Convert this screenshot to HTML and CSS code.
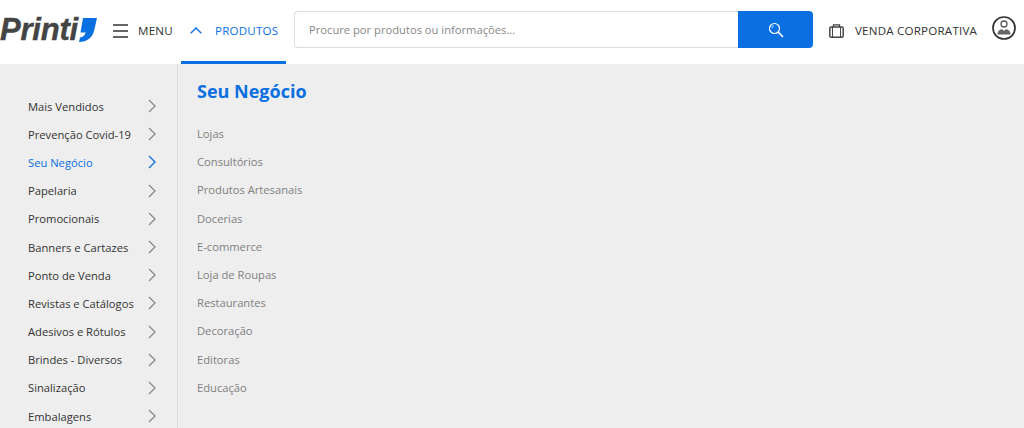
FILE: index.html
```html
<!DOCTYPE html>
<html lang="pt-br">
<head>
    <meta charset="UTF-8">
    <meta name="viewport" content="width=device-width, initial-scale=1.0">
    <title>Printi</title>
    <link rel="stylesheet" href="styles.css">
</head>
<body>
    <header class="topbar">
        <a class="logo" href="#">
            <span class="logo-text">Printi</span>
            <svg class="logo-mark" width="18" height="24" viewBox="0 0 18 24"><path d="M4 0H18L15.500 11C14 19 9.500 23.500 0 24L1 19.500C4 19 5.800 17.500 6.800 14.500H1.500Z" fill="#0a6fe0"/></svg>
        </a>
        <a class="nav-item menu" href="#">
            <svg width="16" height="14" viewBox="0 0 16 14"><path d="M1 1H16M1 7H16M1 13H16" stroke="#333" stroke-width="1.600" fill="none"/></svg>
            <span>MENU</span>
        </a>
        <a class="nav-item produtos" href="#">
            <svg width="12" height="7" viewBox="0 0 12 7"><path d="M.7 6.300 6 1l5.300 5.300" stroke="#0a6fe0" stroke-width="1.400" fill="none"/></svg>
            <span>PRODUTOS</span>
        </a>
        <form class="search">
            <input type="text" placeholder="Procure por produtos ou informações...">
            <button type="button">
                <svg width="16" height="16" viewBox="0 0 16 16"><circle cx="6.500" cy="6.500" r="5" stroke="#fff" stroke-width="1.200" fill="none"/><path d="M10.200 10.200 15 15" stroke="#fff" stroke-width="1.700" fill="none"/><path d="M3.800 6.200A3 3 0 0 1 6 3.800" stroke="#fff" stroke-width=".8" fill="none"/></svg>
            </button>
        </form>
        <a class="nav-item corporate" href="#">
            <svg width="15" height="14" viewBox="0 0 15 14"><rect x=".8" y="3" width="13.400" height="10.200" rx="1.500" stroke="#444" stroke-width="1.500" fill="none"/><path d="M4.500 3V.8h6V3" stroke="#444" stroke-width="1.300" fill="none"/><path d="M3.500 3v10M11.500 3v10" stroke="#444" stroke-width="1"/></svg>
            <span>VENDA CORPORATIVA</span>
        </a>
        <a class="account" href="#">
            <svg width="24" height="24" viewBox="0 0 24 24"><circle cx="12" cy="12" r="11" stroke="#333" stroke-width="1.700" fill="none"/><circle cx="12" cy="8" r="3" stroke="#555" stroke-width="1.300" fill="none"/><path d="M5.500 18.500c0-3.800 2.500-5 4.500-5.200l2 1.500 2-1.500c2 .2 4.500 1.400 4.500 5.200Z" fill="#666"/></svg>
        </a>
    </header>

    <div class="panel">
        <ul class="categories">
            <li><span>Mais Vendidos</span><svg class="chev" viewBox="0 0 8 14"><path d="M1 1l6 6-6 6"/></svg></li>
            <li><span>Prevenção Covid-19</span><svg class="chev" viewBox="0 0 8 14"><path d="M1 1l6 6-6 6"/></svg></li>
            <li class="active"><span>Seu Negócio</span><svg class="chev" viewBox="0 0 8 14"><path d="M1 1l6 6-6 6"/></svg></li>
            <li><span>Papelaria</span><svg class="chev" viewBox="0 0 8 14"><path d="M1 1l6 6-6 6"/></svg></li>
            <li><span>Promocionais</span><svg class="chev" viewBox="0 0 8 14"><path d="M1 1l6 6-6 6"/></svg></li>
            <li><span>Banners e Cartazes</span><svg class="chev" viewBox="0 0 8 14"><path d="M1 1l6 6-6 6"/></svg></li>
            <li><span>Ponto de Venda</span><svg class="chev" viewBox="0 0 8 14"><path d="M1 1l6 6-6 6"/></svg></li>
            <li><span>Revistas e Catálogos</span><svg class="chev" viewBox="0 0 8 14"><path d="M1 1l6 6-6 6"/></svg></li>
            <li><span>Adesivos e Rótulos</span><svg class="chev" viewBox="0 0 8 14"><path d="M1 1l6 6-6 6"/></svg></li>
            <li><span>Brindes - Diversos</span><svg class="chev" viewBox="0 0 8 14"><path d="M1 1l6 6-6 6"/></svg></li>
            <li><span>Sinalização</span><svg class="chev" viewBox="0 0 8 14"><path d="M1 1l6 6-6 6"/></svg></li>
            <li><span>Embalagens</span><svg class="chev" viewBox="0 0 8 14"><path d="M1 1l6 6-6 6"/></svg></li>
        </ul>
        <section class="details">
            <h2>Seu Negócio</h2>
            <ul class="subcategories">
                <li>Lojas</li>
                <li>Consultórios</li>
                <li>Produtos Artesanais</li>
                <li>Docerias</li>
                <li>E-commerce</li>
                <li>Loja de Roupas</li>
                <li>Restaurantes</li>
                <li>Decoração</li>
                <li>Editoras</li>
                <li>Educação</li>
            </ul>
        </section>
    </div>
</body>
</html>
```

FILE: styles.css
```css
html, body {
    height: 100%;
}
body {
    margin: 0;
    font-family: "Open Sans", Arial, sans-serif;
    font-size: 11.200px;
    color: #333;
    background: #eee;
    overflow: hidden;
    display: flex;
    flex-direction: column;
}
a {
    color: inherit;
    text-decoration: none;
}
ul {
    list-style: none;
    margin: 0;
    padding: 0;
}
.topbar {
    display: flex;
    align-items: center;
    height: 64px;
    flex-shrink: 0;
    background: #fff;
}
.logo {
    display: flex;
    align-items: center;
    width: 112px;
    height: 30px;
    margin-top: -4px;
}
.logo-text {
    font-family: "Liberation Sans", Arial, sans-serif;
    font-size: 31px;
    font-weight: bold;
    font-style: italic;
    letter-spacing: -.2px;
    color: #444;
    -webkit-text-stroke: .4px #444;
}
.logo-mark {
    margin-left: 1px;
}
.nav-item {
    display: flex;
    align-items: center;
    height: 100%;
    font-size: 11.600px;
    letter-spacing: .2px;
    box-sizing: border-box;
    padding-bottom: 3px;
}
.menu {
    gap: 10px;
    width: 69px;
}
.produtos {
    width: 105px;
    margin-right: 8px;
    padding: 0 0 0 9px;
    gap: 13px;
    color: #0a6fe0;
    border-bottom: 3px solid #0a6fe0;
}
.search {
    display: flex;
    width: 519px;
    height: 37px;
    margin-top: -5px;
}
.search input {
    flex: 1;
    min-width: 0;
    box-sizing: border-box;
    padding: 0 14px;
    font: 11.200px "Open Sans", Arial, sans-serif;
    border: 1px solid #ddd;
    border-right: 0;
    border-radius: 4px 0 0 4px;
    outline: 0;
}
.search input::placeholder {
    color: #888;
    opacity: 1;
}
.search button {
    display: flex;
    align-items: center;
    justify-content: center;
    width: 75px;
    padding: 0;
    border: 0;
    border-radius: 0 4px 4px 0;
    background: #0a6fe0;
}
.corporate {
    gap: 11px;
    margin-left: 16px;
    width: 163px;
}
.account {
    display: flex;
    margin-top: -8px;
}
.panel {
    flex: 1;
    display: flex;
    min-height: 0;
}
.categories {
    box-sizing: border-box;
    width: 178px;
    flex-shrink: 0;
    padding: 28px 21px 0 28px;
    border-right: 1px solid #ddd;
}
.categories li {
    display: flex;
    align-items: center;
    justify-content: space-between;
    height: 28.200px;
}
.chev {
    width: 8px;
    height: 14px;
    fill: none;
    stroke: #888;
    stroke-width: 1.300;
}
.categories .active {
    color: #0a6fe0;
}
.active .chev {
    stroke: #0a6fe0;
}
.details {
    padding: 15px 0 0 19px;
}
.details h2 {
    margin: 0 0 16px;
    font-size: 18px;
    line-height: 25px;
    font-weight: 700;
    color: #0a6fe0;
}
.subcategories li {
    height: 28.200px;
    line-height: 28px;
    color: #808080;
}
```
